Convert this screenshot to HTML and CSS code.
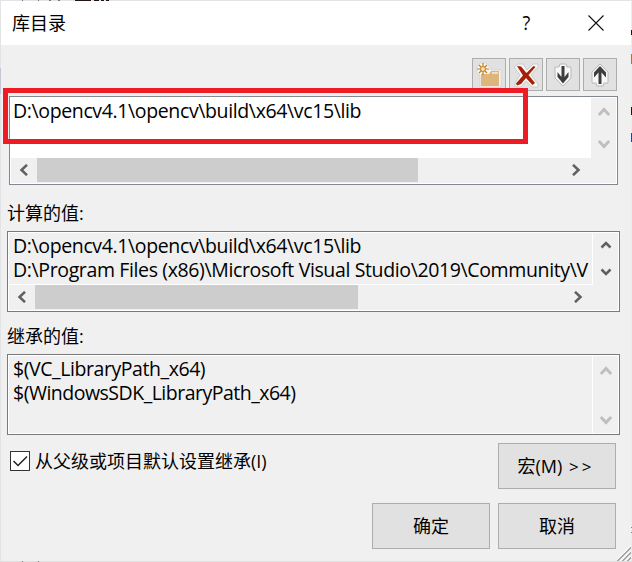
FILE: index.html
```html
<!DOCTYPE html>
<html lang="zh-CN">
<head>
<meta charset="utf-8">
<title>库目录</title>
<link rel="stylesheet" href="styles.css">
</head>
<body>
<main class="dialog">
  <header class="titlebar">
    <h1 class="title">库目录</h1>
    <span class="help">?</span>
    <svg class="close" width="16" height="16" viewBox="0 0 16 16"><path d="M.5.5l15 15M15.5.5l-15 15"/></svg>
  </header>
  <div class="toolbar">
    <button class="tool"><svg width="26" height="26" viewBox="0 0 26 26">
      <path d="M1 5L4 1h7l3 5 1 2h10v17H4V13L1 11z" fill="#f5f5f5" stroke="#cfcfcf" stroke-width=".7"/>
      <path d="M5 12h8l2-3h8v15H5z" fill="#dcb67a"/><path d="M16 11h6" stroke="#f5eee0" stroke-width="1.500"/>
      <path d="M7 1v12M1 7h12M3 3l8 8M11 3l-8 8" stroke="#c27d1a" stroke-width="1.2"/><circle cx="7" cy="7" r="2.4" fill="#f5e8c8" stroke="#c27d1a"/>
    </svg></button>
    <button class="tool"><svg width="26" height="26" viewBox="0 0 26 26">
      <path d="M1 5l4-3h5l4 6 6-6h5v3l-7 8 7 9v3h-6l-6-6-5 6H2v-4l5-8z" fill="#f5f5f5" stroke="#c4c4c4" stroke-width=".8"/>
      <path d="M4 4l4 .5 5.500 6.500 7-7 2 1-7 8 6.500 8-2.500 2-6.500-7-5 6-4 1.500-1-2 7-8z" fill="#a51f07"/>
    </svg></button>
    <button class="tool"><svg width="26" height="26" viewBox="0 0 26 26">
      <path d="M5 5h4l1-3h6l1 3h4v11l-8 8-8-8z" fill="#f8f8f8" stroke="#b8b8b8"/>
      <path d="M11.500 4h3v11l4-5v5L13 21.500 7.500 15v-5l4 5z" fill="#3e3e40"/>
    </svg></button>
    <button class="tool"><svg width="26" height="26" viewBox="0 0 26 26">
      <path d="M5 21h4l1 3h6l1-3h4V10l-8-8-8 8z" fill="#f8f8f8" stroke="#b8b8b8"/>
      <path d="M11.500 22h3V10.500l4.500 5v-5L13 4l-6 6.500v5l4.500-5z" fill="#3e3e40"/>
    </svg></button>
  </div>

  <section class="box edit">
    <div class="pane"><div class="line">D:\opencv4.1\opencv\build\x64\vc15\lib</div></div>
    <div class="vbar off">
      <svg width="12" height="10" viewBox="0 0 12 10"><path d="M.8 8L6 2.500 11.200 8"/></svg>
      <svg width="12" height="10" viewBox="0 0 12 10"><path d="M.8 2L6 7.500 11.200 2"/></svg>
    </div>
    <div class="hbar">
      <svg width="10" height="12" viewBox="0 0 10 12"><path d="M8 .8L2.500 6 8 11.200"/></svg>
      <div class="thumb"></div>
      <svg class="right" width="10" height="12" viewBox="0 0 10 12"><path d="M2 .8L7.500 6 2 11.200"/></svg>
    </div>
  </section>

  <h2 class="label">计算的值:</h2>
  <section class="box computed">
    <div class="pane">
      <div class="line">D:\opencv4.1\opencv\build\x64\vc15\lib</div>
      <div class="line">D:\Program Files (x86)\Microsoft Visual Studio\2019\Community\V</div>
    </div>
    <div class="vbar">
      <svg width="12" height="10" viewBox="0 0 12 10"><path d="M1.500 7.500L6 3l4.500 4.500"/></svg>
      <svg width="12" height="10" viewBox="0 0 12 10"><path d="M1.500 2.500L6 7l4.500-4.500"/></svg>
    </div>
    <div class="hbar">
      <svg width="10" height="12" viewBox="0 0 10 12"><path d="M8 .8L2.500 6 8 11.200"/></svg>
      <div class="thumb"></div>
      <svg class="right" width="10" height="12" viewBox="0 0 10 12"><path d="M2 .8L7.500 6 2 11.200"/></svg>
    </div>
  </section>

  <h2 class="label second">继承的值:</h2>
  <section class="box inherited">
    <div class="pane">
      <div class="line">$(VC_LibraryPath_x64)</div>
      <div class="line sdk">$(WindowsSDK_LibraryPath_x64)</div>
    </div>
    <div class="vbar off">
      <svg width="12" height="10" viewBox="0 0 12 10"><path d="M.8 8L6 2.500 11.200 8"/></svg>
      <svg width="12" height="10" viewBox="0 0 12 10"><path d="M.8 2L6 7.500 11.200 2"/></svg>
    </div>
  </section>

  <div class="options">
    <label class="inherit"><span class="check"><svg width="18" height="18" viewBox="0 0 18 18"><path d="M2.500 9l4.500 4.500 9-9"/></svg></span>从父级或项目默认设置继承(I)</label>
    <button class="btn macro">宏(M) <span class="more">&gt;&gt;</span></button>
  </div>
  <footer class="actions">
    <button class="btn">确定</button>
    <button class="btn">取消</button>
  </footer>
  <svg class="grip" width="14" height="14" viewBox="0 0 14 14"><path class="light" d="M-1 14L14-1M4 14L14 4M9 14l5-5"/><path d="M0 14.500L14.500 0M5 14.500L14.500 5M10 14.500l4.500-4.500"/></svg>
  <div class="highlight"></div>
</main>
<svg class="behind" width="632" height="562" viewBox="0 0 632 562">
  <path d="M22 .5h1M38 .5h1M49 .5h2M58 .5h2M22 561.500h1M38 561.500h1" stroke="#777"/>
  <path d="M75 .5h16M94 .5h5M101 .5h3M106 .5h3M631.500 30v5M631.500 107v8" stroke="#201510"/>
  <path d="M631.500 54v10" stroke="#b8731f"/>
  <path d="M631.500 133v9" stroke="#174a91"/>
  <path d="M.5 68v26" stroke="#c3c5d8"/>
  <path d="M631.500 527v1M631.500 532v1" stroke="#888"/>
</svg>
</body>
</html>
```
FILE: styles.css
```css
* { box-sizing: border-box; }
body { margin: 0; }
.dialog {
  position: relative;
  width: 632px;
  height: 562px;
  overflow: hidden;
  background: #f0f0f0;
  border: 1px solid #e2e3e7;
  border-right: 1px solid #ececec;
  border-bottom-color: #dfdfdf;
  font: 18px/24px "Open Sans", "Noto Sans CJK SC", sans-serif;
  color: #000;
}
.titlebar { display: flex; align-items: center; height: 44px; background: #fff; padding: 0 27px 0 11px; }
.title, .label { margin: 0; font: 400 18px/24px "Open Sans", "Noto Sans CJK SC", sans-serif; }
.title { flex: 1; }
.help { font-size: 20px; margin-right: 57px; transform: scaleX(.9); }
.close { fill: none; stroke: #111; stroke-width: 1.1; }
.toolbar { display: flex; justify-content: flex-end; gap: 3px; padding: 13px 14px 0 0; }
.tool { display: flex; align-items: center; justify-content: center; width: 34px; height: 33px; padding: 0; background: #e1e1e1; border: 1px solid #adadad; }
.box {
  display: grid;
  grid-template-columns: 1fr 25px;
  width: 613px;
  height: 81px;
  margin-left: 6px;
  padding: 1px;
  border: 1px solid #7a7a7a;
  background: #f0f0f0;
  box-shadow: inset 0 0 0 1px #fff;
}
.edit { width: 609px; height: 89px; margin: 5px 0 0 8px; border-color: #828790; background: #fff; grid-template-rows: 60px 25px; }
.computed { grid-template-rows: 52px 25px; }
.inherited { grid-template-rows: 77px; }
.pane { min-width: 0; padding: 1px 0 0 4px; }
.edit .pane { padding-left: 2px; }
.line { font-size: 19.500px; letter-spacing: -.37px; line-height: 24px; white-space: pre; }
.inherited .line { letter-spacing: -.43px; }
.inherited .sdk { letter-spacing: -.5px; }
.computed .pane, .inherited .pane { border-right: 1px solid #fff; }
.computed .pane { border-bottom: 1px solid #fff; }
.vbar { display: flex; flex-direction: column; align-items: center; justify-content: space-between; background: #f0f0f0; padding: 9px 0 9px; }
.computed .vbar { padding: 7px 0 8px; }
.inherited .vbar { padding: 10px 0 8px; }
.vbar svg, .hbar svg { fill: none; stroke: #606060; stroke-width: 2.5; flex: none; }
.vbar.off svg { stroke: #bfbfbf; stroke-width: 3; }
.hbar { grid-column: 1 / 3; display: flex; align-items: center; background: #f0f0f0; padding: 0 35px 1px 8px; }
.thumb { height: 24px; background: #cdcdcd; margin-left: 8px; width: 381px; }
.computed .thumb { width: 323px; }
.hbar .right { margin-left: auto; }
.label { margin: 16px 0 6px 6px; }
.label.second { margin: 12px 0 6px 6px; height: 24px; }
.options { display: flex; justify-content: space-between; padding: 8px 15px 0 9px; }
.inherit { display: flex; align-items: center; gap: 5px; height: 36px; }
.check { display: flex; width: 20px; height: 20px; border: 1px solid #333; background: #fff; }
.check svg { fill: none; stroke: #222; stroke-width: 1.5; }
.btn { width: 118px; height: 46px; padding: 0; border: 1px solid #adadad; background: #e1e1e1; font: inherit; color: #000; }
.macro { padding-right: 2px; }
.more { letter-spacing: 3px; font-size: 17px; margin-left: 2px; }
.actions { display: flex; justify-content: flex-end; gap: 8px; padding: 14px 15px 0 0; }
.grip { position: absolute; right: 0; bottom: 0; fill: none; stroke: #999; stroke-width: 1.3; }
.grip .light { stroke: #fff; }
.highlight { position: absolute; left: 2px; top: 87px; width: 525px; height: 56px; border: 5px solid #ed1c24; }
.behind { position: absolute; left: 0; top: 0; fill: none; }
```
